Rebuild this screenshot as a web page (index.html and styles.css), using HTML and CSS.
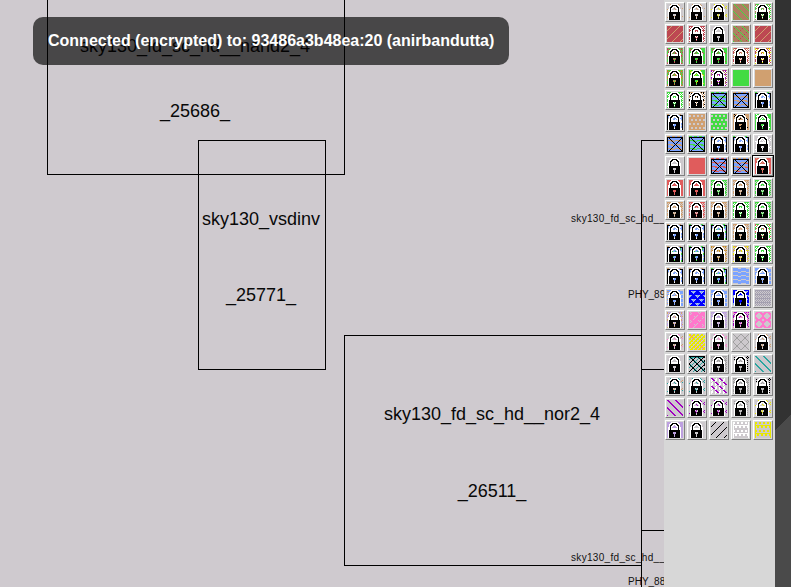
FILE: index.html
```
<!DOCTYPE html>
<html lang="en">
<head>
<meta charset="utf-8">
<title>Layout viewer</title>
<link rel="stylesheet" href="styles.css">
</head>
<body>
<div class="desktop">
  <main class="layout">
    <svg class="cells" width="664" height="587" viewBox="0 0 664 587">
      <g class="outline">
        <path d="M47.5 0V174.5H344.5V0"/>
        <path d="M198.5 140.5H325.5V369.5H198.5Z"/>
        <path d="M641.5 335.5H344.5V565.5H641.5"/>
        <path d="M664 140.5H641.5V587M641.5 369.5H664M641.5 530.5H664"/>
      </g>
      <g class="label">
        <text x="195" y="52">sky130_fd_sc_hd__nand2_4</text>
        <text x="195" y="117">_25686_</text>
        <text x="261" y="225">sky130_vsdinv</text>
        <text x="261" y="301">_25771_</text>
        <text x="492" y="420">sky130_fd_sc_hd__nor2_4</text>
        <text x="492" y="497">_26511_</text>
      </g>
      <g class="label-small">
        <text x="571" y="222" textLength="94">sky130_fd_sc_hd__</text>
        <text x="628" y="298">PHY_89</text>
        <text x="571" y="561" textLength="94">sky130_fd_sc_hd__</text>
        <text x="628" y="585">PHY_88</text>
      </g>
    </svg>
  </main>
  <aside class="palette" id="palette"></aside>
  <div class="backdrop"></div>
</div>
<div class="toast">Connected (encrypted) to: 93486a3b48ea:20 (anirbandutta)</div>
<script src="palette.js"></script>
</body>
</html>
```
FILE: styles.css
```
* { box-sizing: border-box; }
body {
  margin: 0;
  overflow: hidden;
  font-family: "Liberation Sans", sans-serif;
}
.desktop {
  display: grid;
  grid-template-columns: 664px 111px 1fr;
  height: 587px;
  background: #323232;
}
.layout { background: #cfcacf; }
.cells { display: block; }
.outline path { fill: none; stroke: #000; stroke-width: 1; shape-rendering: crispEdges; }
.label { font-size: 18px; text-anchor: middle; fill: #080808; }
.label-small { font-size: 10px; fill: #111; }
.palette {
  display: grid;
  grid-template-columns: repeat(5, 22px);
  grid-auto-rows: 22px;
  align-content: start;
  padding-top: 1px;
  background: #d7d7d7;
}
.swatch { padding: 1px; }
.swatch.selected { padding: 0; border: 1px solid #000; }
.face {
  width: 20px;
  height: 20px;
  padding: 1px;
  border: 1px solid;
  border-color: #fff #808080 #808080 #fff;
  background: #d7d7d7;
}
.face svg { display: block; shape-rendering: crispEdges; }
.backdrop { background: linear-gradient(135deg, transparent 0 50%, #4a4a4a 50%) 0 415px / 16px 16px no-repeat, linear-gradient(#323232 431px, #4a4a4a 431px); }
.toast {
  position: absolute;
  left: 33px;
  top: 17px;
  width: 476px;
  height: 48px;
  padding: 0 15px;
  border-radius: 10px;
  background: rgba(0, 0, 0, .65);
  color: #fff;
  font-size: 16px;
  font-weight: bold;
  line-height: 47px;
  white-space: nowrap;
}
```
FILE: palette.js
```
const colors = {
  _: '#cdc9cd', k: '#000000', w: '#ffffff', t: '#d0a070', b: '#ad8060', g: '#42db42',
  r: '#e05c5c', c: '#bd4852', y: '#e8e800', o: '#c09020', u: '#7ba3ff', n: '#0000ff',
  l: '#bda0e0', v: '#a4a0b0', p: '#ff78cc', m: '#a000c0', e: '#2ba5a0', a: '#a0a0a0'
};

const lock = [
  '....wwwwwww.....',
  '...wwkkkkkww....',
  '..wwkkwwwkkww...',
  '..wkkww.wwkkw...',
  '..wkww...wwkw...',
  '.wwkw.....wkww..',
  '.wwkwwwwwwwkww..',
  '.wwkwwwwwwwkww..',
  '.wkkkkkkkkkkkw..',
  '.wkkkkkkkkkkkw..',
  '.wkkkk...kkkkw..',
  '.wkkkk...kkkkw..',
  '.wkkkkk.kkkkkw..',
  '.wkkkkk.kkkkkw..',
  '.wkkkkk.kkkkkw..',
  '.wkkkkkkkkkkkw..'
];

const fall = (x, y, step) => (x - y + step * 4) % step;

// Each fill returns a colour key for a pixel of the 16x16 swatch.
const fills = {
  solid: (x, y, a) => a,
  check: (x, y, a, b, c) => (x % 2 && y % 2) || (x % 2 === 0 && y % 4 === 2) ? b : (x * 3 + y) % 7 < 2 ? c : a,
  down: (x, y, a, b) => fall(x, y, 8) === 1 ? b : a,
  bold: (x, y, a, b) => fall(x, y, 8) < 2 ? b : a,
  up: (x, y, a, b) => (x + y) % 8 === 4 ? b : a,
  sparse: (x, y, a, b, c) => fall(x, y, 8) === 3 && y % 4 < 2 ? b : (x + y) % 8 === 1 && y % 4 > 1 ? c : a,
  cross: (x, y, a, b, c) => fall(x, y, 8) === 1 ? b : (x + y) % 8 === 3 && x % 4 ? c : a,
  dots: (x, y, a) => (y % 4 === 1 || y % 4 === 2) && (x + (y % 8 < 4 ? 0 : 2)) % 4 < 2 ? '_' : a,
  white: (x, y, a) => y % 4 < 2 && (x + (y % 8 < 4 ? 0 : 2)) % 4 < 2 ? a : (y % 8 === 3 || x === 0 || x === 15 ? a : '_'),
  boxed: (x, y, a, b, c) => {
    if (y === 0) return x % 5 < 3 ? b : 'u';
    if (x === 0 || x === 15 || y === 1 || y === 15 || x === y || x + y === 16) return 'k';
    if (y % 4 === 0 && x % 8 < 6) return b;
    return y % 4 === 1 && x % 8 > 3 ? c : a;
  },
  frame: (x, y, a, b, c) => {
    if (y === 0) return x % 4 < 2 ? b : '_';
    if (x === 0 || x === 15 || (y === 1 && x % 6)) return 'k';
    return (x * 2 + y) % 7 < 2 ? c : (x + y) % 5 === 0 ? '_' : a;
  },
  dash: (x, y, a, b) => (y % 4 === 3 && x % 8 < 5) || (y % 4 === 0 && x % 8 > 4) ? '_' : (y % 4 === 1 && x % 8 < 2 ? b : a),
  scallop: (x, y, a, b) => {
    const d = Math.abs((x + (y % 8 < 4 ? 0 : 4)) % 8 - 4);
    return y % 4 === 0 || d >= 4 - y % 4 ? a : ((x + y) % 3 ? b : '_');
  },
  rings: (x, y, a) => {
    const d = Math.hypot(x % 8 - 3.5, y % 8 - 3.5);
    return d > 2.8 && d < 4.4 ? a : '_';
  },
  hatch: (x, y, a) => (x + y) % 8 === 7 || fall(x, y, 8) === 0 ? a : '_',
  dense: (x, y, a, b) => ((x + y) % 8 === 3 && x % 3) || (fall(x, y, 8) === 1 && y % 4 < 2) ? b : a,
  lumps: (x, y, a, b) => (x >> 1) % 2 === (y >> 1) % 2 || (x + y) % 4 === 0 ? a : ((x * y) % 5 === 2 ? b : '_'),
  grid: (x, y, a) => y === 0 || (x + y) % 8 === 7 || fall(x, y, 8) === 0 || (x === 15 && y % 4 < 2) ? 'k' : (fall(x, y, 8) < 2 || y === 1 || (x + y) % 8 === 3 ? a : '_'),
  stipple: (x, y, a) => (x === 1 || x === 14 || y === 1) && (x + y) % 2 === 0 ? a : (x > 5 && x < 9 && (x + y) % 2 ? 'a' : '_'),
  strokes: (x, y, a) => fall(x, y, 8) < 2 && y % 4 < 3 ? a : (x % 4 < 2 && (x + y) % 4 ? 'w' : '_')
};

// "fill colours" per swatch; a leading * marks a locked layer.
const rows = [
  '*sparse _t_|*sparse _t_|*sparse _yy|down bg|*check gwb',
  'up ct|*check cwc|*solid _|cross bgc|up ct',
  '*check gbc|*dense gc|*dense gc|*check cwt|*check cwy',
  '*check gbo|*dense gy|*check bwm|solid g|solid t',
  '*check gwg|*check twk|boxed ug|boxed ut|*frame ugw',
  '*frame utw|dots t|dots g|*dense tk|*dense gw',
  'boxed ut|boxed ug|*frame utw|*frame ugw|*sparse _ww',
  '*solid _|solid r|boxed ur|boxed utr|*dense rt',
  '*solid r|*solid r|*check g_g|*check t_t|*check g_g',
  '*check t_t|*check r_r|*check t_t|*check gwg|*check g_g',
  '*frame utw|*frame ugw|*frame ugg|*check t_t|*check gwr',
  '*frame utg|*frame ugg|*check t_o|*check t_y|*check gwg',
  '*frame utw|*frame utw|*frame ugg|dash uu|*dash uu',
  '*dash ut|scallop nu|*dash uu|*scallop nu|check v_v',
  '*check l_t|dense p_|*check l_l|*check m_p|rings p',
  '*sparse _pt|lumps yp|*sparse _pp|hatch a|*sparse _tt',
  '*solid _|grid e|*check a_a|*stipple k|bold _e',
  '*sparse _et|*sparse _ee|strokes m|*check a_a|*stipple k',
  'bold _m|*sparse _mm|*sparse _mm|*stipple a|*sparse _yy',
  '*solid l|*solid _|up _k|white w|white y'
];

function drawSwatch(spec) {
  const locked = spec[0] === '*';
  const [name, keys] = spec.replace('*', '').split(' ');
  let body = '';
  for (let y = 0; y < 16; y++) {
    for (let x = 0; x < 16; x++) {
      let key = locked ? lock[y][x] : '.';
      if (key === '.') key = fills[name](x, y, keys[0], keys[1] || keys[0], keys[2] || keys[1] || keys[0]);
      body += `<rect x="${x}" y="${y}" width="1" height="1" fill="${colors[key]}"/>`;
    }
  }
  return `<svg width="16" height="16" viewBox="0 0 16 16">${body}</svg>`;
}

document.getElementById('palette').innerHTML = rows.flatMap((row, r) =>
  row.split('|').map((spec, c) =>
    `<div class="swatch${r === 7 && c === 4 ? ' selected' : ''}"><div class="face">${drawSwatch(spec)}</div></div>`
  )
).join('');
```
